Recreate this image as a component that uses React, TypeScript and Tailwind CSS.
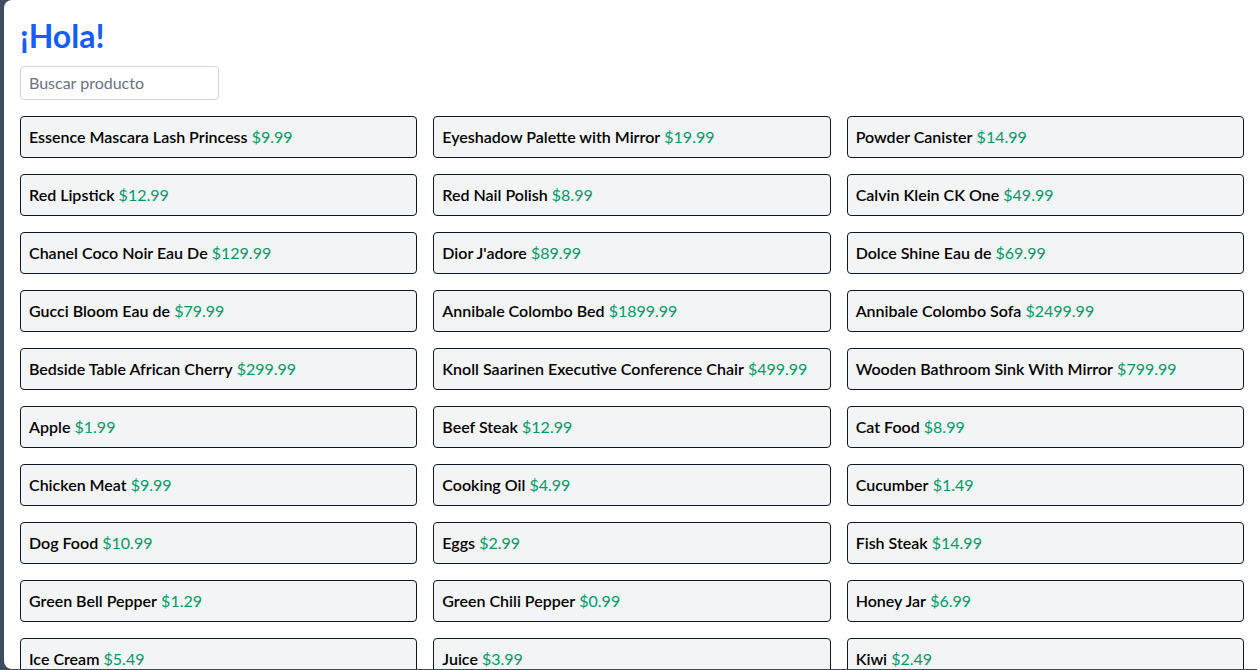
import React from 'react';

type Product = { title: string; price: number };

const products: Product[] = [
  { title: 'Essence Mascara Lash Princess', price: 9.99 },
  { title: 'Eyeshadow Palette with Mirror', price: 19.99 },
  { title: 'Powder Canister', price: 14.99 },
  { title: 'Red Lipstick', price: 12.99 },
  { title: 'Red Nail Polish', price: 8.99 },
  { title: 'Calvin Klein CK One', price: 49.99 },
  { title: 'Chanel Coco Noir Eau De', price: 129.99 },
  { title: "Dior J'adore", price: 89.99 },
  { title: 'Dolce Shine Eau de', price: 69.99 },
  { title: 'Gucci Bloom Eau de', price: 79.99 },
  { title: 'Annibale Colombo Bed', price: 1899.99 },
  { title: 'Annibale Colombo Sofa', price: 2499.99 },
  { title: 'Bedside Table African Cherry', price: 299.99 },
  { title: 'Knoll Saarinen Executive Conference Chair', price: 499.99 },
  { title: 'Wooden Bathroom Sink With Mirror', price: 799.99 },
  { title: 'Apple', price: 1.99 },
  { title: 'Beef Steak', price: 12.99 },
  { title: 'Cat Food', price: 8.99 },
  { title: 'Chicken Meat', price: 9.99 },
  { title: 'Cooking Oil', price: 4.99 },
  { title: 'Cucumber', price: 1.49 },
  { title: 'Dog Food', price: 10.99 },
  { title: 'Eggs', price: 2.99 },
  { title: 'Fish Steak', price: 14.99 },
  { title: 'Green Bell Pepper', price: 1.29 },
  { title: 'Green Chili Pepper', price: 0.99 },
  { title: 'Honey Jar', price: 6.99 },
  { title: 'Ice Cream', price: 5.49 },
  { title: 'Juice', price: 3.99 },
  { title: 'Kiwi', price: 2.49 },
  { title: 'Lemon', price: 0.79 },
  { title: 'Milk', price: 3.49 },
  { title: 'Mulberry', price: 4.99 },
];

const ProductCard: React.FC<{ product: Product }> = ({ product }) => (
  <div className="border border-gray-900 rounded bg-gray-100 p-2 leading-6">
    <span className="font-semibold text-black">{product.title}</span>{' '}
    <span className="text-emerald-600">${product.price}</span>
  </div>
);

export default function App() {
  return (
    <div
      className="h-[670px] overflow-hidden bg-[#3f4b5e] pl-1"
      style={{ fontFamily: 'Lato, "Noto Sans", sans-serif' }}
    >
      <div className="w-[1256px] h-[669px] bg-white rounded-l-lg overflow-hidden p-4">
        <h1 className="text-[32px] leading-9 font-bold text-blue-600 mb-3 mt-0.5">¡Hola!</h1>
        <input
          type="text"
          placeholder="Buscar producto"
          className="w-[199px] border border-gray-300 rounded px-2 py-1 leading-6 mb-4 placeholder:text-gray-500 outline-none"
        />
        <div className="grid grid-cols-3 gap-4">
          {products.map((p) => (
            <ProductCard key={p.title} product={p} />
          ))}
        </div>
      </div>
    </div>
  );
}
